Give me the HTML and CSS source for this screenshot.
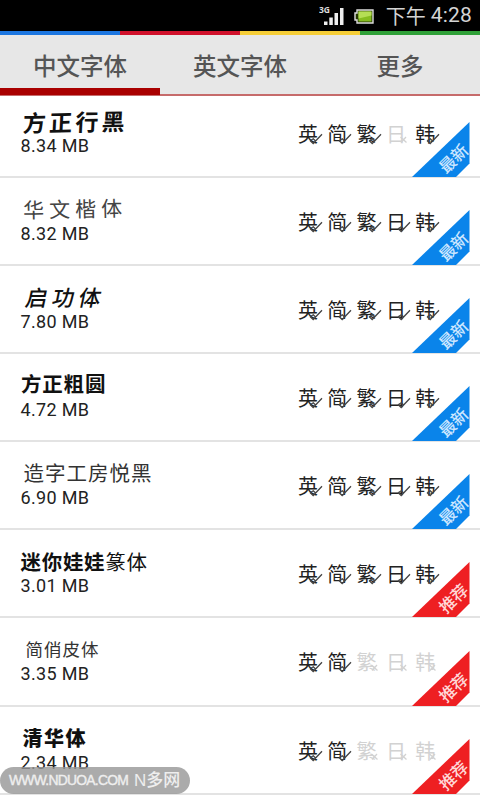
FILE: index.html
```html
<!DOCTYPE html>
<html lang="zh-CN">
<head>
<meta charset="utf-8">
<title>字体</title>
<link rel="stylesheet" href="styles.css">
</head>
<body>
<svg class="defs" width="0" height="0">
  <symbol id="yes" viewBox="0 0 14 12"><path d="M1 7.5 4.200 10.500 13 1.200M1.500 7.500 4.300 5.800 6.300 7.700" fill="none" stroke="#444" stroke-width="1.3"/></symbol>
  <symbol id="no" viewBox="0 0 14 12"><path d="M3.500 4 9.500 9.500M9 4 4 9.500" fill="none" stroke="#d2d2d2" stroke-width="1.3"/></symbol>
  <symbol id="band" viewBox="0 0 58 55"><path d="M0 55 57.5 0V41.500L44 55Z" fill="currentColor"/></symbol>
</svg>
<div class="screen">
  <div class="status">
    <svg class="signal" width="26" height="22" viewBox="0 0 26 22">
      <text x="0" y="8" class="net">3G</text>
      <path d="M5 16.500h3.500V20H5zM10.300 12.500h3.500V20h-3.500zM15.500 8H19v12h-3.500zM21 3h3.500v17H21z" fill="#eee"/>
    </svg>
    <svg class="battery" width="20" height="15" viewBox="0 0 20 15">
      <path d="M3 1h16v13H3v-3H1V4h2z" fill="#263800" stroke="#ddd" stroke-width="1.4"/>
      <path d="M4.500 2.500h13v10h-13z" fill="#86bd20"/><path d="M4.500 2.500h13v4l-13 3z" fill="#b5de55"/>
    </svg>
    <span class="ampm">下午</span><span class="clock">4:28</span>
  </div>
  <div class="stripe"><i class="s1"></i><i class="s2"></i><i class="s3"></i><i class="s4"></i></div>
  <div class="tabs"><div class="tab on">中文字体</div><div class="tab">英文字体</div><div class="tab">更多</div></div>
  <div class="list">
    <div class="row first"><div class="info"><div class="name n1">方正行黑</div><div class="size">8.34 MB</div></div>
      <div class="langs"><span>英<svg><use href="#yes"/></svg></span><span>简<svg><use href="#yes"/></svg></span><span>繁<svg><use href="#yes"/></svg></span><span class="off">日<svg><use href="#no"/></svg></span><span>韩<svg><use href="#yes"/></svg></span></div>
      <div class="ribbon new"><svg><use href="#band"/></svg><b>最新</b></div></div>
    <div class="row"><div class="info"><div class="name n2">华文楷体</div><div class="size">8.32 MB</div></div>
      <div class="langs"><span>英<svg><use href="#yes"/></svg></span><span>简<svg><use href="#yes"/></svg></span><span>繁<svg><use href="#yes"/></svg></span><span>日<svg><use href="#yes"/></svg></span><span>韩<svg><use href="#yes"/></svg></span></div>
      <div class="ribbon new"><svg><use href="#band"/></svg><b>最新</b></div></div>
    <div class="row"><div class="info"><div class="name n3">启功体</div><div class="size">7.80 MB</div></div>
      <div class="langs"><span>英<svg><use href="#yes"/></svg></span><span>简<svg><use href="#yes"/></svg></span><span>繁<svg><use href="#yes"/></svg></span><span>日<svg><use href="#yes"/></svg></span><span>韩<svg><use href="#yes"/></svg></span></div>
      <div class="ribbon new"><svg><use href="#band"/></svg><b>最新</b></div></div>
    <div class="row"><div class="info"><div class="name n4">方正粗圆</div><div class="size">4.72 MB</div></div>
      <div class="langs"><span>英<svg><use href="#yes"/></svg></span><span>简<svg><use href="#yes"/></svg></span><span>繁<svg><use href="#yes"/></svg></span><span>日<svg><use href="#yes"/></svg></span><span>韩<svg><use href="#yes"/></svg></span></div>
      <div class="ribbon new"><svg><use href="#band"/></svg><b>最新</b></div></div>
    <div class="row"><div class="info"><div class="name n5">造字工房悦黑</div><div class="size">6.90 MB</div></div>
      <div class="langs"><span>英<svg><use href="#yes"/></svg></span><span>简<svg><use href="#yes"/></svg></span><span>繁<svg><use href="#yes"/></svg></span><span>日<svg><use href="#yes"/></svg></span><span>韩<svg><use href="#yes"/></svg></span></div>
      <div class="ribbon new"><svg><use href="#band"/></svg><b>最新</b></div></div>
    <div class="row"><div class="info"><div class="name n6"><b>迷你娃娃</b>篆体</div><div class="size">3.01 MB</div></div>
      <div class="langs"><span>英<svg><use href="#yes"/></svg></span><span>简<svg><use href="#yes"/></svg></span><span>繁<svg><use href="#yes"/></svg></span><span>日<svg><use href="#yes"/></svg></span><span>韩<svg><use href="#yes"/></svg></span></div>
      <div class="ribbon hot"><svg><use href="#band"/></svg><b>推荐</b></div></div>
    <div class="row"><div class="info"><div class="name n7">简俏皮体</div><div class="size">3.35 MB</div></div>
      <div class="langs"><span>英<svg><use href="#yes"/></svg></span><span>简<svg><use href="#yes"/></svg></span><span class="off">繁<svg><use href="#no"/></svg></span><span class="off">日<svg><use href="#no"/></svg></span><span class="off">韩<svg><use href="#no"/></svg></span></div>
      <div class="ribbon hot"><svg><use href="#band"/></svg><b>推荐</b></div></div>
    <div class="row"><div class="info"><div class="name n8">清华体</div><div class="size">2.34 MB</div></div>
      <div class="langs"><span>英<svg><use href="#yes"/></svg></span><span>简<svg><use href="#yes"/></svg></span><span class="off">繁<svg><use href="#no"/></svg></span><span class="off">日<svg><use href="#no"/></svg></span><span class="off">韩<svg><use href="#no"/></svg></span></div>
      <div class="ribbon hot"><svg><use href="#band"/></svg><b>推荐</b></div></div>
  </div>
  <div class="mark"><span class="url">WWW.NDUOA.COM</span><span class="site">N多网</span></div>
</div>
</body>
</html>
```
FILE: styles.css
```css
* { box-sizing: border-box; }
body { margin: 0; background: #fff; font-family: Roboto, "Noto Sans CJK SC", sans-serif; }
.defs { position: absolute; }
.screen { position: relative; width: 480px; height: 800px; overflow: hidden; background: #fff; }
.status { height: 31px; background: #000; display: flex; align-items: center; justify-content: flex-end; padding-right: 8px; color: #d4d4d4; }
.signal { margin: 0 9px 0 0; }
.net { font: bold 8.500px "Open Sans", sans-serif; fill: #ddd; }
.battery { margin: 2px 12px 0 0; }
.ampm { font-size: 20px; line-height: 31px; font-family: "Noto Sans CJK SC", sans-serif; }
.clock { font-size: 21px; line-height: 33px; margin-left: 5px; letter-spacing: .2px; }
.stripe { display: flex; height: 4px; }
.stripe i { flex: 1; }
.s1 { background: #1c76e0; }
.s2 { background: #d0112b; }
.s3 { background: #f6ce38; }
.s4 { background: #2fa038; }
.tabs { display: flex; height: 61px; background: #e7e7e7; border-bottom: 2px solid #c66b6b; }
.tab { flex: 1; height: 60px; text-align: center; font: 500 23.500px/61px "Noto Sans CJK SC", sans-serif; color: #555; border-bottom: 0 solid #a90000; }
.tab.on { border-bottom-width: 7px; }
.row { position: relative; height: 88.100px; display: flex; border-bottom: 2px solid #e3e3e3; }
.row.first { height: 82px; }
.row.first .info, .row.first .langs { margin-top: -6px; }
.info { width: 298px; padding: 17px 0 0 20.500px; }
.name { height: 29px; line-height: 27px; white-space: nowrap; color: #111; font-family: "Noto Sans CJK SC", sans-serif; transform-origin: 0 50%; }
.size { font-size: 18px; line-height: 20px; letter-spacing: .35px; color: #222; }
.n1 { font-size: 23px; font-weight: 700; letter-spacing: 3.300px; padding-left: 2px; line-height: 31px; transform: rotate(-1deg) skewX(-4deg); }
.n2 { font-size: 21px; font-weight: 400; letter-spacing: 5px; padding-left: 2px; color: #444; line-height: 29px; transform: rotate(-1deg); }
.n3 { font-size: 22px; font-weight: 500; letter-spacing: 4.500px; padding-left: 5px; transform: skewX(-12deg); }
.n4 { font-size: 20.500px; font-weight: 700; letter-spacing: .8px; line-height: 25px; padding-left: .5px; }
.n5 { font-size: 20.500px; letter-spacing: 1px; padding-left: 3px; color: #333; }
.n6 { font-size: 20.500px; letter-spacing: .7px; line-height: 29px; }
.n7 { font-size: 17.500px; letter-spacing: 1px; padding-left: 5px; color: #333; }
.n8 { font-size: 20px; font-weight: 900; letter-spacing: 1.500px; padding-left: 2px; }
.langs { display: flex; padding-top: 29px; }
.langs span { position: relative; width: 29.300px; height: 30px; font: 20px/30px "Noto Sans CJK SC", sans-serif; color: #222; }
.langs .off { color: #d2d2d2; }
.langs svg { position: absolute; left: 11px; top: 14px; width: 14px; height: 12px; }
.ribbon { position: absolute; right: 10px; bottom: -1px; width: 58px; height: 55px; }
.ribbon svg { display: block; width: 58px; height: 55px; }
.ribbon b { position: absolute; left: 21px; top: 22px; width: 40px; height: 28px; text-align: center; font: 500 16.500px/28px "Noto Sans CJK SC", sans-serif; color: #cde7ff; transform: rotate(-44deg); }
.new { color: #0a84ea; }
.hot { color: #ee1f22; }
.ribbon.hot b { color: #ffd8d8; }
.mark { position: absolute; left: 0; top: 767px; width: 190px; height: 27px; border-radius: 14px; background: rgba(150,150,150,.8); display: flex; align-items: center; padding-left: 9px; color: #eee; }
.url { font: 13.900px/27px "Liberation Sans", sans-serif; letter-spacing: -.75px; width: 125px; white-space: nowrap; -webkit-text-stroke: .4px #eee; }
.site { font: 500 17px/27px "Liberation Sans", "Noto Sans CJK SC", sans-serif; white-space: nowrap; }
```
